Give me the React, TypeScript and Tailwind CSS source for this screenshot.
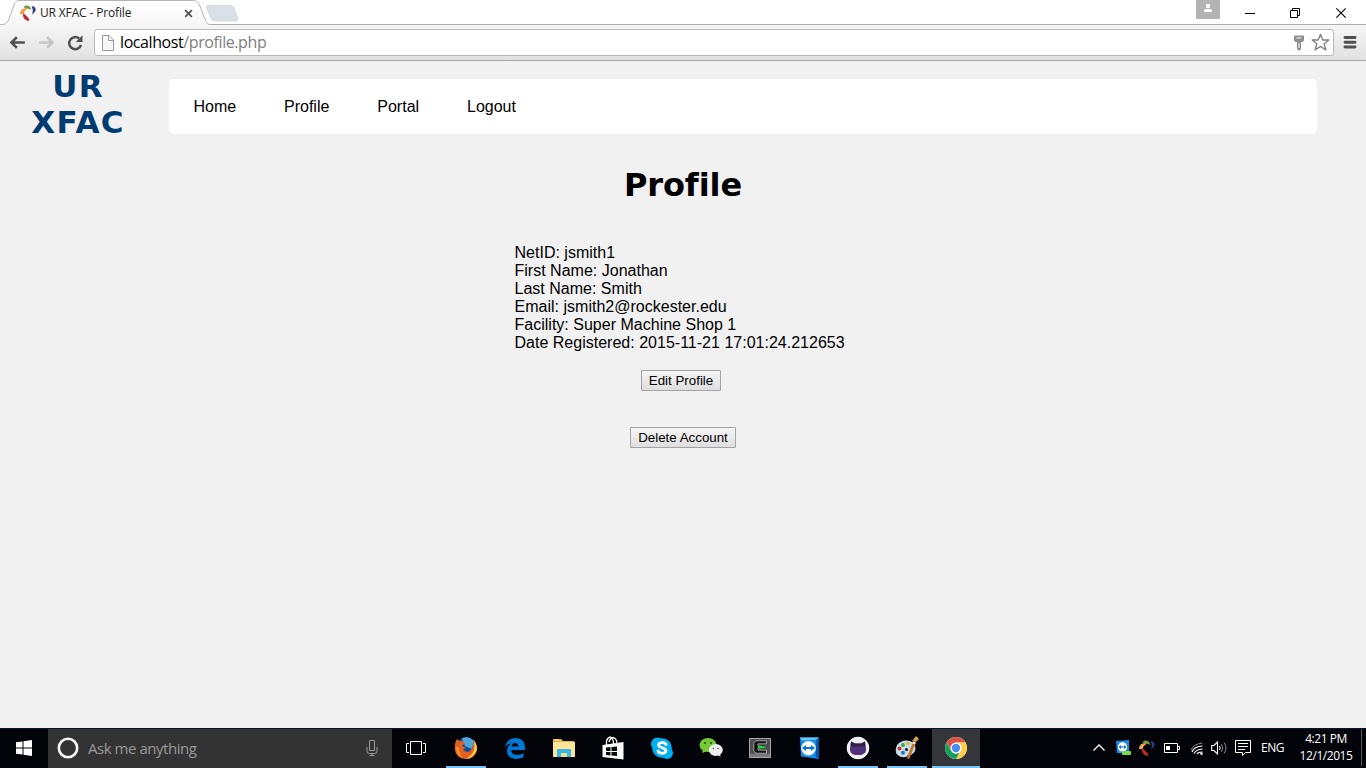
import React from "react";

type IconProps = { children: React.ReactNode; size?: number; className?: string };

function Icon({ children, size = 24, className = "" }: IconProps) {
  return (
    <svg width={size} height={size} viewBox={`0 0 ${size} ${size}`} fill="none" className={`block shrink-0 ${className}`}>
      {children}
    </svg>
  );
}

function Pinwheel({ size = 16 }: { size?: number }) {
  return (
    <svg width={size} height={size} viewBox="0 0 16 16" className="block shrink-0">
      <path d="M3.500 1.800C6.500-.6 10.800.3 11.200 5.200 9.500 3.800 7.500 3.600 5.800 3.800Z" fill="#6a9f49" />
      <path d="M0 9.200C-.2 5 3.500 2 8 4 5.200 4.800 4 6.500 3.600 9.800 2.500 9 1 8.800 0 9.200Z" fill="#f0a24c" />
      <path d="M3.400 8C5 10.300 8.500 11.500 9.500 15.800 5.500 16.300 2 12.800 3.400 8Z" fill="#c5282c" />
      <path d="M11.500 1.200C17 .8 17 6.800 11.800 9.500 13.300 6.500 13.200 4 11.500 1.200Z" fill="#2a3a80" />
    </svg>
  );
}

function TabStrip() {
  return (
    <div className="relative h-[25px] w-full bg-white">
      <svg width="1366" height="25" viewBox="0 0 1366 25" className="absolute left-0 top-0" fill="none">
        <defs>
          <linearGradient id="tab" x1="0" y1="0" x2="0" y2="1">
            <stop stopColor="#fff" />
            <stop offset="1" stopColor="#f6f6f6" />
          </linearGradient>
        </defs>
        <path d="M0 24.500H1366" stroke="#adadad" />
        <path d="M0 24.500C5 24.500 7 24 9 19L14 5C15 2 16 .5 20 .5H192C197 .5 198 2 199.500 5L205 19C206.500 23 207 24.500 211 24.500V26H0Z" fill="url(#tab)" />
        <path d="M0 24.500C5 24.500 7 24 9 19L14 5C15 2 16 .5 20 .5H192C197 .5 198 2 199.500 5L205 19C206.500 23 207 24.500 211 24.500" stroke="#b5b5b5" />
        <path d="M208.500 5.500H230Q233 5.500 234 8L237.500 18Q238.500 21 235.500 21H215Q212 21 211 18L206.500 8Q205.500 5.500 208.500 5.500Z" fill="#dae0e8" stroke="#cdd1d7" strokeWidth=".7" />
      </svg>
      <div className="relative flex h-full items-start">
        <div className="ml-5 mt-[5px]"><Pinwheel /></div>
        <span className="ml-1 mt-[5px] w-[144px] whitespace-nowrap font-['Open_Sans',sans-serif] text-[12px] leading-4 tracking-[-0.15px] text-[#222] [font-variant-ligatures:none]">UR XFAC - Profile</span>
        <Icon size={9} className="mt-[9px]"><path d="M1.200 1.200 7.800 7.800M7.800 1.200 1.200 7.800" stroke="#555" strokeWidth="1.800" /></Icon>
        <div className="ml-auto flex h-[19px] w-6 justify-center bg-[#b3b3b3]">
          <Icon size={10} className="mt-[3px]">
            <circle cx="5" cy="3" r="2.200" fill="#fff" />
            <path d="M1 9V8Q1 6 3 6H7Q9 6 9 8V9Z" fill="#fff" />
          </Icon>
        </div>
        <Icon size={12} className="ml-6 mt-[7px]"><path d="M1 6.500H11" stroke="#000" /></Icon>
        <Icon size={12} className="ml-[33px] mt-[7px]">
          <path d="M1.500 3.500H8.500V10.500H1.500ZM3.500 3.500V1.500H10.500V8.500H8.500" stroke="#000" />
        </Icon>
        <Icon size={12} className="ml-[34px] mr-[19px] mt-[7px]"><path d="M1.300 1.300 10.700 10.700M10.700 1.300 1.300 10.700" stroke="#000" strokeWidth="1.100" /></Icon>
      </div>
    </div>
  );
}

function Toolbar() {
  return (
    <div className="flex h-9 w-full items-center border-b border-[#a9a9a9] bg-linear-to-b from-[#f6f6f6] to-[#e1e1e1]">
      <Icon size={16} className="ml-[9px]"><path d="M15.800 7.500H3M7.800 2.200 2.500 7.500 7.800 12.800" stroke="#505050" strokeWidth="2.600" /></Icon>
      <Icon size={16} className="ml-[14px]"><path d="M.2 7.500H13M8.200 2.200 13.500 7.500 8.200 12.800" stroke="#c5c5c5" strokeWidth="2.600" /></Icon>
      <Icon size={16} className="ml-[12px]">
        <path d="M14 9.800A6 6 0 1 1 12.200 3.600" stroke="#505050" strokeWidth="2.500" />
        <path d="M15.500 .3V7H8.800Z" fill="#505050" />
      </Icon>
      <div className="ml-[11px] flex h-[27px] w-[1240px] items-center rounded-[3px] border border-[#b9b9b9] bg-white">
        <svg width="13" height="16" viewBox="0 0 13 16" fill="none" className="ml-[6px]">
          <path d="M1.500.5H8L12.500 5V15.500H1.500Z" fill="#f7f7f7" stroke="#999" />
          <path d="M7.500 1V5.500H12" stroke="#999" />
        </svg>
        <span className="ml-[6px] -mt-px whitespace-nowrap font-['Open_Sans',sans-serif] text-[16px] leading-5 tracking-[-0.41px] text-[#808080] [font-variant-ligatures:none]">
          <span className="text-black">localhost</span>/profile.php
        </span>
        <svg width="12" height="16" viewBox="0 0 12 16" fill="none" className="ml-auto">
          <path d="M2 .5H10Q11 .5 11 1.500V5Q11 7 9 7H8V14L6.500 15.500H5.500L4 14V7H3Q1 7 1 5V1.500Q1 .5 2 .5Z" fill="#8e8e8e" />
          <path d="M3.500 2.500H8.500V3.500H3.500ZM5.500 8H6.500V13H5.500Z" fill="#fff" />
        </svg>
        <Icon size={19} className="ml-[6px] mr-[3px]">
          <path d="M9.500 1.300 11.800 7H17.800L13.100 10.700 14.900 17 9.500 13.400 4.100 17 5.900 10.700 1.200 7H7.200Z" stroke="#808080" strokeWidth="1.300" strokeLinejoin="round" />
        </Icon>
      </div>
      <Icon size={14} className="ml-[9px] -mt-px"><path d="M2 2.500H12M2 7.300H12M2 12H12" stroke="#505050" strokeWidth="2.900" strokeLinecap="round" /></Icon>
    </div>
  );
}

const nav = [
  { label: "Home", style: "w-[90.5px]" },
  { label: "Profile", style: "w-[93.3px]" },
  { label: "Portal", style: "w-[89.700px]" },
  { label: "Logout", style: "w-[60px]" },
];

const details = [
  "NetID: jsmith1",
  "First Name: Jonathan",
  "Last Name: Smith",
  "Email: jsmith2@rockester.edu",
  "Facility: Super Machine Shop 1",
  "Date Registered: 2015-11-21 17:01:24.212653",
];

const buttonStyle = "h-[21px] rounded-[1px] border border-[#a3a3a3] bg-linear-to-b from-[#f6f6f6] to-[#dedede] text-[13.333px] leading-[18px] whitespace-nowrap text-black";

function Page() {
  return (
    <main className="h-[667px] bg-[#f1f1f1] font-['Liberation_Sans',Arial,sans-serif] text-[16px] leading-[18px] text-black">
      <header className="flex">
        <h1 className="ml-[29px] mt-[7px] w-[98px] text-center font-['DejaVu_Sans',sans-serif] text-[31px] font-bold leading-[36px] tracking-[1.3px] text-[#003b71]">UR XFAC</h1>
        <nav className="ml-[42px] mt-[18px] flex h-[55px] w-[1148px] items-center rounded-[5px] bg-white pl-[24.5px]">
          {nav.map((n) => <a key={n.label} className={n.style}>{n.label}</a>)}
        </nav>
      </header>
      <h2 className="mt-[26px] text-center font-['DejaVu_Sans',sans-serif] text-[32px] font-bold leading-[38px] tracking-[-0.1px] [font-variant-ligatures:none]">Profile</h2>
      <div className="ml-[514.5px] mt-[40px]">
        {details.map((d) => <p key={d} className="whitespace-nowrap tracking-[0.01px]">{d}</p>)}
      </div>
      <div className="flex flex-col items-start">
        <button className={`${buttonStyle} ml-[641px] mt-[18px] w-20`}>Edit Profile</button>
        <button className={`${buttonStyle} ml-[630px] mt-9 w-[106px]`}>Delete Account</button>
      </div>
    </main>
  );
}

function Firefox() {
  return (
    <Icon>
      <circle cx="12.500" cy="11" r="10" fill="#174f96" />
      <path d="M8 2.500Q14-1 20 5L18 13 11 10Z" fill="#4ba9df" />
      <path d="M3 3 5.500 5.200Q9 4.500 11.500 7L8 9.500Q9 11.500 12 11.500L9 13.500Q12 17.500 16 15 20 12 19 5 24 9 23 14.500 21 23 12 23 3 23 1 14.500 0 8 3 3Z" fill="#e2601f" />
      <path d="M20 4Q24 10 22.500 15 19 22 12 23 18 19 20 14 21 9 20 4Z" fill="#ffc843" />
      <path d="M2 10Q1 19 9 22 5 17 5 12Z" fill="#f28a25" />
    </Icon>
  );
}

function Edge() {
  return (
    <Icon>
      <path d="M2 11Q4 2 13 2 21.500 2.500 22 11V14H8Q8.500 18.800 14 19 18 19 20.500 17.200V21.200Q17 23 13 23 4 22.500 4 14.500 4 10 8.500 7.200 4.500 8 2 11ZM8.500 10.500H15.500Q15 7 12 7 9 7 8.500 10.500Z" fill="#0078d7" />
    </Icon>
  );
}

function Explorer() {
  return (
    <Icon>
      <path d="M1 3H9L11 5H22V21H1Z" fill="#e9b843" />
      <path d="M1 6H23V21H1Z" fill="#fce696" />
      <path d="M3 3.500H7V4.500H3Z" fill="#fff3b8" />
      <path d="M5 21V14Q5 13 6 13H18Q19 13 19 14V21H15V17H9V21Z" fill="#35b7eb" />
      <path d="M9 17H15V21H9Z" fill="#f7df87" />
    </Icon>
  );
}

function Store() {
  return (
    <Icon>
      <path d="M1.500 9 22.500 6V23.500L1.500 21Z" fill="#fff" />
      <path d="M5.500 9V5Q6.500 1.500 9.500 1 12.500 2 12.500 8M8 6Q9 2 12.500 1.500 15.500 2.500 16 7" stroke="#fff" strokeWidth="1.300" />
      <path d="M5 11.500 9.500 11V15H5ZM10.500 11 16 10.500V15H10.500ZM5 16H9.500V19.500L5 19ZM10.500 16H16V20L10.500 19.500Z" fill="#050910" />
    </Icon>
  );
}

function Skype() {
  return (
    <Icon>
      <circle cx="7.500" cy="8" r="6.500" fill="#00aff0" /><circle cx="12" cy="12" r="9.800" fill="#00aff0" /><circle cx="17" cy="17" r="6" fill="#00aff0" />
      <path d="M16 8.500C15 6 9 6 8.500 9 8.500 12.500 16 11 16 15 15.500 18 9 18 8 15" stroke="#fff" strokeWidth="2.700" strokeLinecap="round" />
    </Icon>
  );
}

function WeChat() {
  return (
    <Icon>
      <ellipse cx="9" cy="9" rx="8.500" ry="7" fill="#75c937" /><path d="M4 13 3 17 8 15Z" fill="#75c937" />
      <circle cx="6" cy="7" r="1" fill="#234515" /><circle cx="12" cy="7" r="1" fill="#234515" />
      <ellipse cx="16.800" cy="14" rx="7" ry="6" fill="#eee" /><path d="M18 18 21.500 21 21 17Z" fill="#eee" />
      <circle cx="14.500" cy="12.500" r=".8" fill="#555" /><circle cx="19" cy="12.500" r=".8" fill="#555" />
    </Icon>
  );
}

function EditorIcon() {
  return (
    <Icon>
      <path d="M1.500 2.500H22.500V21.500H1.500Z" fill="#4c4d4c" stroke="#aaa" />
      <path d="M2 17.500H22V21H2Z" fill="#777" />
      <path d="M18 6.500H9L7.500 8V14L9 15.500H18M9 11H17" stroke="#101310" strokeWidth="3.200" />
      <path d="M18.500 4.800H8L5.800 7V15L8 17.200H18.500V14.200H10V12.700M10 9.300V7.800H18.500V4.800" stroke="#b5b5b5" strokeWidth=".8" />
      <path d="M10 9.300 17.500 10.500V12L10 12.700Z" fill="#25d54a" />
    </Icon>
  );
}

function TeamViewer({ size = 24 }: { size?: number }) {
  return (
    <svg width={size} height={size} viewBox="0 0 24 24" className="block shrink-0">
      <path d="M3 1.500 22 1.500V23L4 20.500Z" fill="#168ce9" /><path d="M3 1.500 22 1.500 19.500 3.500 5 4.500Z" fill="#68ccfa" /><path d="M19.500 3.500 22 1.500V23L18.500 21Z" fill="#0754ad" />
      <circle cx="11.500" cy="12.200" r="7" fill="#fff" stroke="#b8ddf4" />
      <path d="M5 12 9 9V11H14V9L18 12 14 15V13H9V15Z" fill="#0678ce" />
    </svg>
  );
}

function GitHubCat() {
  return (
    <Icon>
      <circle cx="12" cy="12" r="10.800" fill="#eeedf2" stroke="#fff" />
      <path d="M5 5.500 9 7.500H15L19 5.500 19.500 10Q22 17 15 19H9Q2 17 4.500 10Z" fill="#503179" />
      <path d="M5 5.500 9 7.500H15L19 5.500 19.500 10.500H4.500Z" fill="#332247" />
    </Icon>
  );
}

function Paint() {
  return (
    <Icon>
      <path d="M2 9Q7 3 15 5 22 8 20 15 17 20 13 19L11 21Q4 22 1 17 0 13 2 9Z" fill="#c5dce9" />
      <circle cx="8" cy="9" r="1.900" fill="#34a744" /><circle cx="13" cy="7.500" r="1.800" fill="#e5b422" /><circle cx="4.500" cy="12.500" r="1.900" fill="#d7342d" /><circle cx="8" cy="16.800" r="2" fill="#2876b9" /><circle cx="11.500" cy="13.500" r="1.500" fill="#111" />
      <path d="M13 22.500 19.500 6" stroke="#c67523" strokeWidth="2.700" /><path d="M17 5 21 0 24 3 21 6Z" fill="#d99a59" /><path d="M17.500 6.500 20.500 7.500" stroke="#eee" strokeWidth="2" />
    </Icon>
  );
}

function ChromeIcon() {
  return (
    <Icon>
      <circle cx="12" cy="12" r="11" fill="#fff" />
      <path d="M2.500 6.500A11 11 0 0 1 21.500 6.500H12L7.200 14.800Z" fill="#dd5144" />
      <path d="M21.500 6.500A11 11 0 0 1 12 23L16.800 14.800 16.500 8.500 12 6.500Z" fill="#ffcd43" />
      <path d="M12 23A11 11 0 0 1 2.500 6.500L7.200 14.800Q9 18 13 17.300L15.500 16.500Z" fill="#169f5c" />
      <circle cx="12" cy="12" r="5.500" fill="#fff" /><circle cx="12" cy="12" r="4.200" fill="#4b8bf4" />
    </Icon>
  );
}

const apps = [
  { name: "Firefox", icon: <Firefox />, open: true },
  { name: "Edge", icon: <Edge /> },
  { name: "Explorer", icon: <Explorer /> },
  { name: "Store", icon: <Store /> },
  { name: "Skype", icon: <Skype /> },
  { name: "WeChat", icon: <WeChat /> },
  { name: "Editor", icon: <EditorIcon /> },
  { name: "TeamViewer", icon: <TeamViewer /> },
  { name: "GitHub", icon: <GitHubCat />, open: true },
  { name: "Paint", icon: <Paint />, open: true },
];

function Taskbar() {
  return (
    <footer className="flex h-10 w-full border-t border-[#06162b] bg-[#02040a] font-['Open_Sans',sans-serif]">
      <div className="flex w-12 items-center justify-center">
        <Icon size={16} className="-mt-px"><path d="M0 2.300 6.500 1.400V7.500H0ZM7.500 1.200 16 0V7.500H7.500ZM0 8.500H6.500V14.600L0 13.700ZM7.500 8.500H16V16L7.500 14.800Z" fill="#fff" /></Icon>
      </div>
      <div className="flex w-[344px] items-center bg-[#333]">
        <Icon size={22} className="-mt-[2px] ml-[9px]"><circle cx="11" cy="11" r="9.200" stroke="#f5f5f5" strokeWidth="2.600" /></Icon>
        <span className="-mt-[2px] ml-[9px] whitespace-nowrap text-[15px] leading-5 tracking-[-0.46px] text-[#999]">Ask me anything</span>
        <svg width="12" height="18" viewBox="0 0 12 18" fill="none" className="-mt-[2px] ml-auto mr-[14px]">
          <path d="M3.500 1.500H8.500V11.500H3.500ZM1 8V12Q1 14.500 3.500 14.500H8.500Q11 14.500 11 12V8M6 14.500V16.500M3.500 16.500H8.500" stroke="#9a9a9a" />
        </svg>
      </div>
      <div className="mr-[2px] flex w-12 items-center justify-center">
        <svg width="20" height="14" viewBox="0 0 20 14" fill="none" className="-mt-[2px]"><path d="M4.500.5H15.500V13.500H4.500ZM3 2.500H.5V11.500H3M17 2.500H19.500V11.500H17" stroke="#fff" /></svg>
      </div>
      {apps.map((a) => (
        <div key={a.name} className="mr-px flex w-12 flex-col items-center justify-between pt-[7px]">
          {a.icon}
          {a.open && <div className="h-[2px] w-10 bg-[#76c5f8]" />}
        </div>
      ))}
      <div className="flex w-12 flex-col items-center justify-between bg-[#35363a] pt-[7px]">
        <ChromeIcon />
        <div className="h-[2px] w-12 bg-[#76c5f8]" />
      </div>
      <div className="ml-auto flex items-center pb-[2px]">
        <svg width="12" height="7" viewBox="0 0 12 7" fill="none" className="mr-[11px]"><path d="M.5 6.500 6 1 11.500 6.500" stroke="#fff" strokeWidth="1.300" /></svg>
        <svg width="16" height="16" viewBox="0 0 16 16" className="mr-[7px] block">
          <path d="M0 1 13 0V14L1 13Z" fill="#178ceb" /><circle cx="6.500" cy="7" r="4.700" fill="#fff" /><path d="M2.500 7 5 5V6.500H8V5L10.500 7 8 9V7.500H5V9Z" fill="#0874cc" /><rect x="6" y="11" width="9" height="4" rx="1" fill="#79d943" />
        </svg>
        <Pinwheel />
        <svg width="16" height="10" viewBox="0 0 16 10" fill="none" className="ml-[9px]"><path d="M.5.500H13.500V9.500H.5ZM13.500 3.500H15.500V6.500H13.500" stroke="#fff" /><path d="M2 3H6V7H2Z" fill="#fff" /></svg>
        <svg width="14" height="14" viewBox="0 0 14 14" fill="none" className="ml-[10px]">
          <path d="M1 9Q3.500 3 12.500 2" stroke="#888" /><path d="M2 11Q4 5.500 12.500 5M4 12.500Q6 8.500 12.500 8M7 13Q8 11 12.500 11" stroke="#fff" strokeWidth="1.200" /><circle cx="11.500" cy="12.800" r="1.200" fill="#fff" />
        </svg>
        <svg width="16" height="14" viewBox="0 0 16 14" fill="none" className="ml-[7px]">
          <path d="M.7 4.500H3L6.500 1V13L3 9.500H.7Z" stroke="#fff" strokeWidth="1.100" /><path d="M8.500 5Q10 7 8.500 9" stroke="#fff" /><path d="M10.500 3.200Q13 7 10.500 10.800M13 1.500Q17 7 13 12.500" stroke="#888" />
        </svg>
        <svg width="17" height="16" viewBox="0 0 17 16" fill="none" className="ml-[8px] block"><path d="M.5.500H15.500V12.500H10.500L7.500 15.500V12.500H.5ZM3 3.500H13M3 6.500H13M3 9.500H10" stroke="#fff" /></svg>
        <span className="ml-[9px] w-[38px] whitespace-nowrap text-[12px] leading-4 tracking-[-0.45px] text-white">ENG</span>
        <div className="-mt-px w-[54px] whitespace-nowrap text-center text-[12px] leading-[17px] tracking-[-0.45px] text-white"><div>4:21 PM</div><div>12/1/2015</div></div>
        <div className="ml-[8px] mr-[4px] h-[37px] w-px bg-[#555]" />
      </div>
    </footer>
  );
}

export default function App() {
  return (
    <div className="h-[768px] w-[1366px] overflow-hidden bg-[#f1f1f1]">
      <TabStrip />
      <Toolbar />
      <Page />
      <Taskbar />
    </div>
  );
}
